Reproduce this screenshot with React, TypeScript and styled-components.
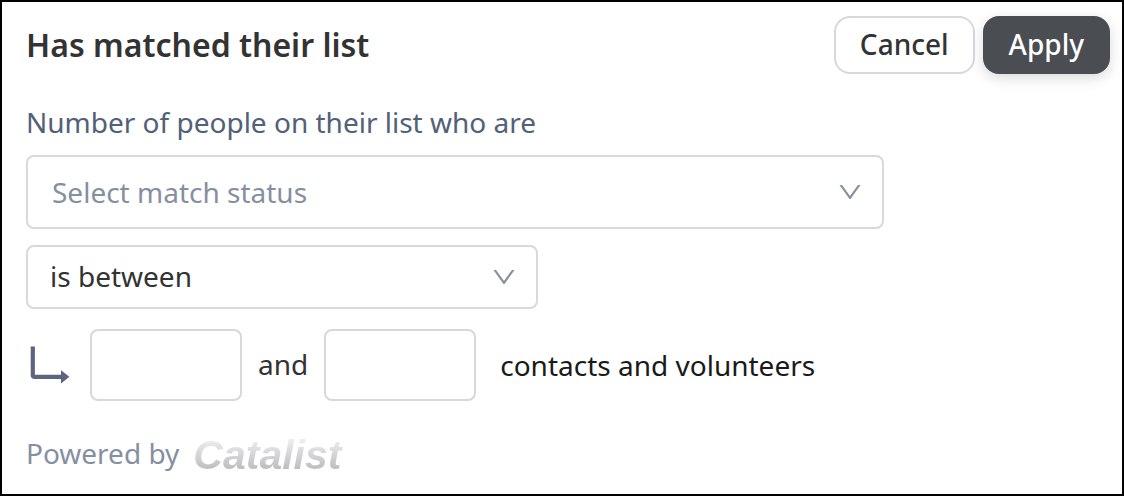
import React from "react";
import styled, { createGlobalStyle } from "styled-components";

const GlobalStyle = createGlobalStyle`
  *, *::before, *::after { box-sizing: border-box; }
  body {
    margin: 0;
    background: #fff;
    color: #333;
    font-family: "Noto Sans", sans-serif;
    font-size: 28px;
    line-height: 38px;
  }
  button, input, select { font: inherit; color: inherit; }
`;

const Panel = styled.form`
  min-height: 100vh;
  border: 2px solid #000;
  padding: 14px 12px 16px 24px;
`;

const Header = styled.header`
  display: flex;
  align-items: center;
  justify-content: space-between;
`;

const Title = styled.h1`
  margin: 0;
  font-size: 32px;
  font-weight: 600;
  line-height: 58px;
`;

const Actions = styled.div`
  display: flex;
  gap: 8px;
`;

const Button = styled.button<{ $primary?: boolean }>`
  height: 58px;
  padding: 0 24px 2px;
  border: 2px solid ${(p) => (p.$primary ? "#4a4d52" : "#d5d9de")};
  border-radius: 16px;
  background: ${(p) => (p.$primary ? "#4a4d52" : "#fff")};
  color: ${(p) => (p.$primary ? "#fff" : "#333")};
  font-weight: 500;
  box-shadow: ${(p) => (p.$primary ? "0 4px 14px rgba(0, 0, 0, 0.15)" : "none")};
  cursor: pointer;
`;

const Label = styled.label`
  display: block;
  margin: 29px 0 14px;
  color: #526078;
`;

const SelectBox = styled.div<{ $width: number }>`
  display: grid;
  align-items: center;
  width: 100%;
  max-width: ${(p) => p.$width}px;
  margin-bottom: 16px;

  > * { grid-area: 1 / 1; }
`;

const Select = styled.select<{ $large?: boolean }>`
  appearance: none;
  width: 100%;
  height: ${(p) => (p.$large ? 74 : 64)}px;
  padding: ${(p) => (p.$large ? "0 56px 0 24px" : "0 56px 2px 22px")};
  border: 2px solid #d9d9d9;
  border-radius: 8px;
  background: #fff;
  color: ${(p) => (p.$large ? "#868fa0" : "#333")};
`;

const Chevron = styled.svg`
  justify-self: end;
  width: 28px;
  height: 28px;
  margin-right: 20px;
  fill: #868fa0;
  pointer-events: none;
`;

const RangeRow = styled.div`
  display: flex;
  align-items: center;
  margin-top: 20px;
`;

const Arrow = styled.svg`
  width: 42px;
  height: 40px;
  margin: 0 20px 0 2px;
  flex: none;
`;

const NumberInput = styled.input`
  width: 152px;
  min-width: 0;
  height: 72px;
  padding: 0 20px;
  border: 2px solid #d5d9de;
  border-radius: 8px;
  background: #fff;
`;

const Joiner = styled.span`
  margin: 0 16px;
  padding-bottom: 2px;
`;

const Unit = styled.span`
  margin-left: 24px;
  color: #1a1a1a;
`;

const Footer = styled.footer`
  display: flex;
  align-items: center;
  gap: 14px;
  margin-top: 28px;
  color: #868fa0;
`;

const Brand = styled.span`
  padding: 4px 4px 0 0;
  background: linear-gradient(#eeeff0 20%, #b8babd 88%);
  background-clip: text;
  -webkit-background-clip: text;
  color: transparent;
  font-family: "Liberation Sans", Arial, sans-serif;
  font-size: 41px;
  font-style: italic;
  font-weight: 700;
  line-height: 44px;
`;

const DownIcon = () => (
  <Chevron viewBox="0 0 1024 1024" aria-hidden="true">
    <path d="M884 256h-75c-5.1 0-9.9 2.5-12.9 6.6L512 654.2 227.9 262.6c-3-4.1-7.8-6.6-12.9-6.6h-75c-6.5 0-10.3 7.4-6.5 12.7l352.6 486.1c12.8 17.6 39 17.6 51.7 0l352.6-486.1c3.9-5.3.1-12.7-6.4-12.7z" />
  </Chevron>
);

export default function App() {
  return (
    <>
      <GlobalStyle />
      <Panel onSubmit={(e) => e.preventDefault()}>
        <Header>
          <Title>Has matched their list</Title>
          <Actions>
            <Button type="button">Cancel</Button>
            <Button type="submit" $primary>Apply</Button>
          </Actions>
        </Header>

        <Label htmlFor="status">Number of people on their list who are</Label>
        <SelectBox $width={858}>
          <Select id="status" $large defaultValue="">
            <option value="">Select match status</option>
          </Select>
          <DownIcon />
        </SelectBox>
        <SelectBox $width={512}>
          <Select aria-label="Comparison" defaultValue="between">
            <option value="between">is between</option>
          </Select>
          <DownIcon />
        </SelectBox>

        <RangeRow>
          <Arrow viewBox="0 0 42 40" aria-hidden="true">
            <path d="M4.8 1.5V30Q4.8 31.8 6.6 31.8H34" fill="none" stroke="#5a667e" strokeWidth="4.2" />
            <path d="M33 25.2L41.4 31.8L33 38.4Z" fill="#5a667e" />
          </Arrow>
          <NumberInput type="text" inputMode="numeric" aria-label="Minimum" />
          <Joiner>and</Joiner>
          <NumberInput type="text" inputMode="numeric" aria-label="Maximum" />
          <Unit>contacts and volunteers</Unit>
        </RangeRow>

        <Footer>
          <span>Powered by</span>
          <Brand>Catalist</Brand>
        </Footer>
      </Panel>
    </>
  );
}
